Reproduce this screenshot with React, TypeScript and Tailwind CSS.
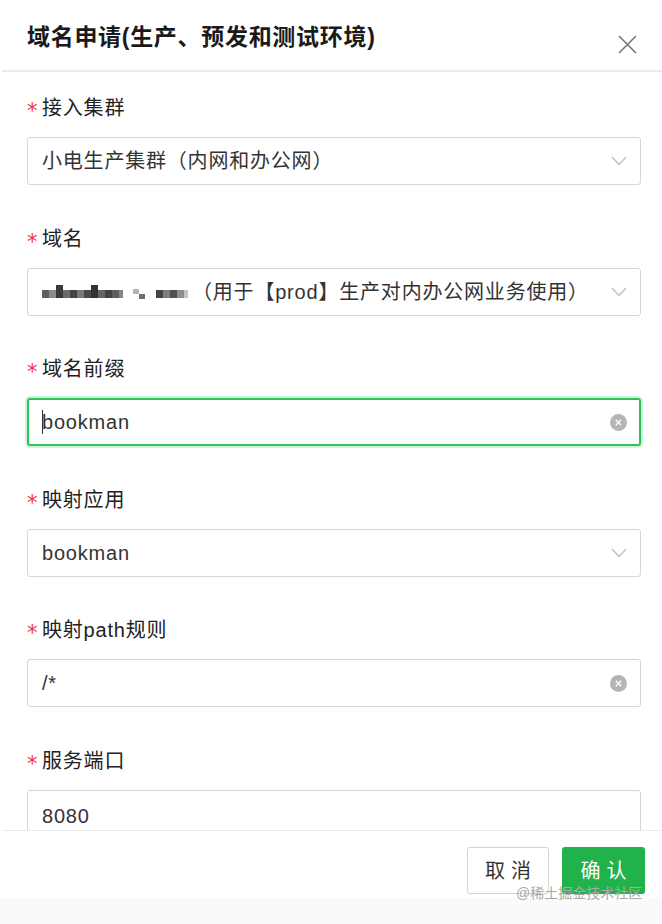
import React from "react";

const Chevron = () => (
  <svg width="16" height="10" viewBox="0 0 16 10" fill="none" className="shrink-0">
    <path d="M1 1 L8 8.5 L15 1" stroke="#bdbdbd" strokeWidth="1.3" />
  </svg>
);

const ClearIcon = () => (
  <span className="w-[17px] h-[17px] rounded-full bg-[#b5b5b5] flex items-center justify-center shrink-0">
    <svg width="7" height="7" viewBox="0 0 7 7">
      <path d="M0.8 0.8 L6.2 6.2 M6.2 0.8 L0.8 6.2" stroke="#fff" strokeWidth="1.3" />
    </svg>
  </span>
);

const Label = ({ text }: { text: string }) => (
  <div className="h-[28px] flex items-center mb-[15px]">
    <span className="text-[#f0353b] text-[21px] w-[15px] leading-none pt-[7px] font-['DejaVu_Sans',sans-serif]">*</span>
    <span className="text-[20px] text-[#222] tracking-[0.8px]">{text}</span>
  </div>
);

const Box = ({
  children,
  focused,
  right,
}: {
  children: React.ReactNode;
  focused?: boolean;
  right?: React.ReactNode;
}) => (
  <div
    className={
      focused
        ? "h-[48px] shrink-0 rounded-[3px] border-2 border-[#2ec25b] shadow-[0_0_0_2px_rgba(46,194,91,0.22)] flex items-center pl-[13px] pr-[12px] mb-[39.5px]"
        : "h-[48px] shrink-0 rounded-[3px] border border-[#d6d6d6] flex items-center pl-[14px] pr-[13px] mb-[39.5px]"
    }
  >
    <div className="flex-1 min-w-0 flex items-center text-[20px] tracking-[0.8px] text-[#333] whitespace-nowrap">{children}</div>
    {right}
  </div>
);

const Mosaic = () => (
  <svg width="150" height="16" viewBox="0 0 150 16" className="shrink-0">
    <rect x="0" y="6" width="7" height="8" fill="#5e5e5e" />
    <rect x="7" y="6" width="7" height="8" fill="#8a8a8a" />
    <rect x="14" y="1" width="7" height="13" fill="#3a3a3a" />
    <rect x="21" y="6" width="7" height="8" fill="#6b6b6b" />
    <rect x="28" y="6" width="7" height="8" fill="#444" />
    <rect x="35" y="6" width="7" height="8" fill="#7a7a7a" />
    <rect x="42" y="6" width="7" height="8" fill="#4a4a4a" />
    <rect x="49" y="1" width="7" height="13" fill="#333" />
    <rect x="56" y="6" width="7" height="8" fill="#666" />
    <rect x="63" y="6" width="7" height="8" fill="#444" />
    <rect x="70" y="6" width="7" height="8" fill="#5e5e5e" />
    <rect x="77" y="6" width="4" height="8" fill="#888" />
    <rect x="91" y="5" width="6" height="5" fill="#b5b5b5" />
    <rect x="97" y="10" width="6" height="5" fill="#6e6e6e" />
    <rect x="114" y="6" width="7" height="8" fill="#444" />
    <rect x="121" y="6" width="7" height="8" fill="#7e7e7e" />
    <rect x="128" y="6" width="7" height="8" fill="#505050" />
    <rect x="135" y="6" width="7" height="8" fill="#8e8e8e" />
    <rect x="142" y="6" width="4" height="8" fill="#c4c4c4" />
  </svg>
);

export default function App() {
  return (
    <div className="w-[662px] h-[924px] bg-white flex flex-col overflow-hidden font-['Liberation_Sans','Noto_Sans_CJK_SC',sans-serif] relative">
      {/* Header */}
      <div className="h-[70px] flex items-start justify-between pl-[27px] pr-[25px] pt-[20px] shrink-0">
        <div className="text-[23px] font-bold text-[#1a1a1a] leading-[34px] tracking-[0.7px]">
          域名申请(生产、预发和测试环境)
        </div>
        <svg width="19" height="19" viewBox="0 0 19 19" className="mt-[15px]">
          <path d="M1 1 L18 18 M18 1 L1 18" stroke="#767676" strokeWidth="1.6" />
        </svg>
      </div>
      <div className="ml-[2px] h-[2px] bg-[#ebebeb] shrink-0" />

      {/* Body */}
      <div className="h-[758px] shrink-0 overflow-hidden pl-[27px] pr-[21px] pt-[22px] flex flex-col">
        <Label text="接入集群" />
        <Box right={<Chevron />}>小电生产集群（内网和办公网）</Box>

        <Label text="域名" />
        <Box right={<Chevron />}>
          <Mosaic />
          <span>（用于【prod】生产对内办公网业务使用）</span>
        </Box>

        <Label text="域名前缀" />
        <Box focused right={<ClearIcon />}>
          <span className="w-[1px] h-[24px] bg-[#333] mr-[-1px]" />
          bookman
        </Box>

        <Label text="映射应用" />
        <Box right={<Chevron />}>bookman</Box>

        <Label text="映射path规则" />
        <Box right={<ClearIcon />}>/*</Box>

        <Label text="服务端口" />
        <Box>
          <span className="pt-[4px]">8080</span>
        </Box>
      </div>

      {/* Footer */}
      <div className="ml-[2px] h-[1px] bg-[#ebebeb] shrink-0" />
      <div className="h-[67px] shrink-0 flex justify-end items-start pt-[16px] pr-[17px] gap-[13px]">
        <button className="w-[82px] h-[47px] rounded-[3px] border border-[#d4d4d4] bg-white text-[20px] text-[#333] tracking-[6px] pl-[6px]">
          取消
        </button>
        <button className="w-[83px] h-[47px] rounded-[3px] bg-[#22b24c] text-[20px] text-white tracking-[6px] pl-[6px]">
          确认
        </button>
      </div>
      <div className="flex-1 bg-[#fafafa]" />
      <div className="absolute left-[516px] top-[883px] text-[14px] text-[#a8a8a8] leading-[20px]">
        @稀土掘金技术社区
      </div>
    </div>
  );
}
